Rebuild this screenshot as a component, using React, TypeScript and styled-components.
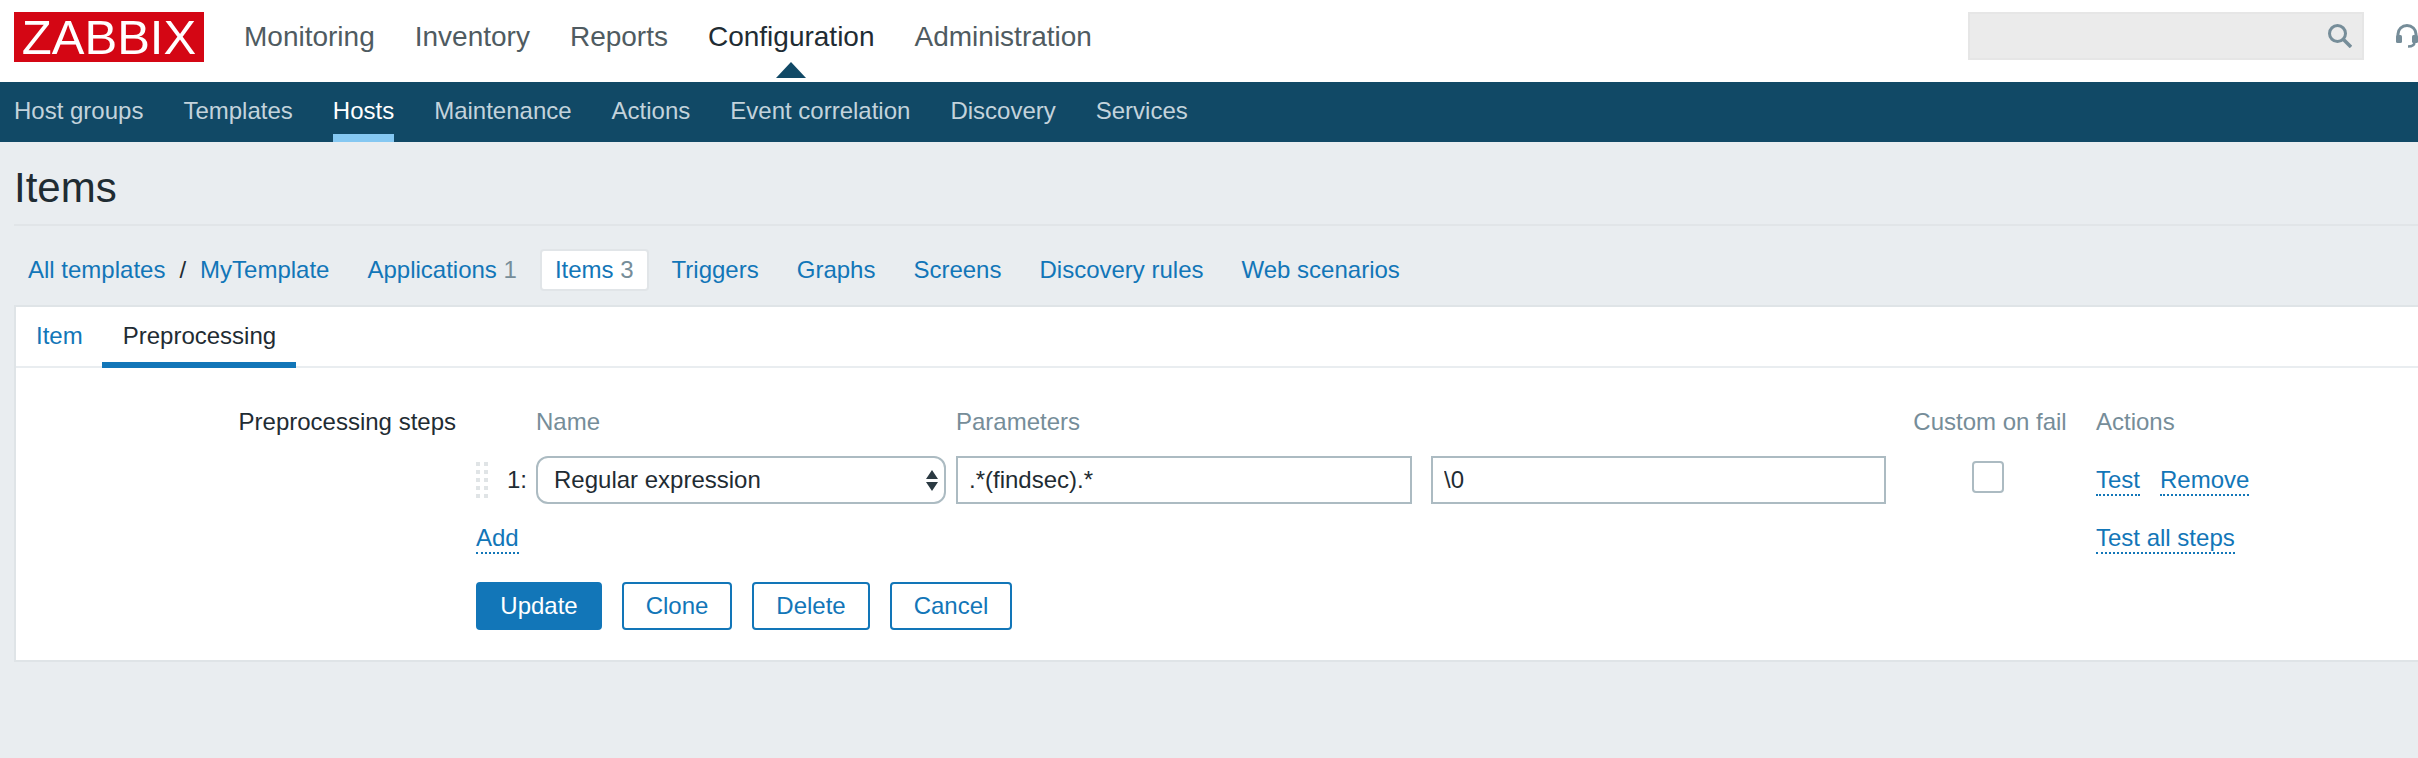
import React from "react";
import styled, { createGlobalStyle } from "styled-components";

const Global = createGlobalStyle`
  html, body { margin: 0; padding: 0; overflow: hidden; background: #e9edf0; }
  body { font-family: "Liberation Sans", Arial, sans-serif; font-size: 24px; color: #1f2c33; }
  * { box-sizing: border-box; }
`;

const Page = styled.div`
  width: 2418px;
  height: 758px;
  overflow: hidden;
  background: #e9edf0;
`;

const Header = styled.header`
  height: 82px;
  background: #fff;
  display: flex;
  align-items: flex-start;
  padding-left: 14px;
`;

const Logo = styled.div`
  width: 190px;
  height: 50px;
  margin-top: 12px;
  background: #d40614;
  color: #fff;
  font-size: 49px;
  line-height: 50px;
  text-align: center;
`;

const MainMenu = styled.nav`
  display: flex;
  gap: 40px;
  margin-left: 40px;
  height: 82px;
  align-items: center;
`;

const MainLink = styled.a<{ $active?: boolean }>`
  position: relative;
  font-size: 28px;
  line-height: 32px;
  margin-top: -9px;
  color: ${(p) => (p.$active ? "#1f2c33" : "#4f5b61")};
  ${(p) =>
    p.$active &&
    `&::after {
      content: "";
      position: absolute;
      left: 50%;
      bottom: -25px;
      margin-left: -15px;
      border-left: 15px solid transparent;
      border-right: 15px solid transparent;
      border-bottom: 16px solid #114966;
    }`}
`;

const HeaderRight = styled.div`
  margin-left: auto;
  display: flex;
  align-items: flex-start;
  width: 450px;
  padding-top: 12px;
`;

const Search = styled.div`
  width: 396px;
  height: 48px;
  background: #ebebeb;
  border: 2px solid #e6e6e6;
  display: flex;
  align-items: center;
  justify-content: flex-end;
  padding-right: 10px;
  flex: none;
`;

const SupportIcon = styled.svg`
  margin: 12px 0 0 32px;
  flex: none;
`;

const SubNav = styled.nav`
  height: 60px;
  background: #114966;
  display: flex;
  gap: 40px;
  padding-left: 14px;
`;

const SubLink = styled.a<{ $active?: boolean }>`
  height: 60px;
  line-height: 58px;
  font-size: 24px;
  color: ${(p) => (p.$active ? "#fff" : "#c3d3dc")};
  border-bottom: 8px solid ${(p) => (p.$active ? "#85c8f2" : "transparent")};
`;

const TitleBar = styled.div`
  height: 84px;
  margin-left: 14px;
  border-bottom: 2px solid #e1e5e8;
`;

const Title = styled.h1`
  margin: 0;
  font-size: 42px;
  font-weight: 400;
  line-height: 48px;
  padding-top: 22px;
  color: #1f2c33;
`;

const Crumbs = styled.div`
  display: flex;
  align-items: center;
  gap: 8px;
  height: 42px;
  margin-top: 23px;
  padding-left: 13px;
`;

const Crumb = styled.a<{ $active?: boolean }>`
  height: 42px;
  line-height: 38px;
  padding: 0 13px;
  border: 2px solid ${(p) => (p.$active ? "#e1e5e8" : "transparent")};
  border-radius: 4px;
  background: ${(p) => (p.$active ? "#fff" : "transparent")};
  color: #1276b8;
  white-space: nowrap;
`;

const CrumbPair = styled.div`
  display: flex;
  align-items: center;
  height: 42px;
  padding: 0 15px 0 15px;
  color: #1276b8;
`;

const Slash = styled.span`
  color: #1f2c33;
  margin: 0 14px 0 14px;
`;

const Count = styled.span`
  color: #768d99;
`;

const Panel = styled.section`
  margin: 14px 0 0 14px;
  background: #fff;
  border: 2px solid #dfe4e7;
  border-right: 0;
  height: 357px;
`;

const Tabs = styled.div`
  display: flex;
  height: 61px;
  border-bottom: 2px solid #e9edf0;
`;

const Tab = styled.a<{ $active?: boolean }>`
  height: 61px;
  padding: 0 20px 0 ${(p) => (p.$active ? "21px" : "20px")};
  margin-left: ${(p) => (p.$active ? "-1px" : "0")};
  line-height: 58px;
  color: ${(p) => (p.$active ? "#1f2c33" : "#1276b8")};
  border-bottom: 6px solid ${(p) => (p.$active ? "#1276b8" : "transparent")};
`;

const FormRow = styled.div`
  display: flex;
  padding-top: 39px;
`;

const FieldLabel = styled.div`
  width: 440px;
  flex: none;
  text-align: right;
  line-height: 30px;
  margin-right: 20px;
`;

const Field = styled.div`
  flex: 1;
`;

const StepTable = styled.div`
  display: grid;
  grid-template-columns: 60px 420px 475px 455px 210px 1fr;
  grid-template-rows: 30px 48px 31px;
  row-gap: 19px;
  align-items: center;
`;

const Head = styled.div<{ $center?: boolean }>`
  color: #768d99;
  line-height: 30px;
  white-space: nowrap;
  ${(p) => p.$center && "text-align: center; margin-left: -2px;"}
`;

const Spacer = styled.div``;

const Lead = styled.div`
  display: flex;
  align-items: center;
  height: 48px;
`;

const Num = styled.span`
  margin-left: 19px;
  color: #1f2c33;
`;

const SelectBox = styled.div`
  width: 410px;
  height: 48px;
  border: 2px solid #acbbc2;
  border-radius: 12px;
  background: #fff;
  display: flex;
  align-items: center;
  justify-content: space-between;
  padding: 0 6px 0 16px;
  color: #1f2c33;
`;

const TextField = styled.input`
  width: 456px;
  height: 48px;
  border: 2px solid #acbbc2;
  background: #fff;
  padding: 0 11px;
  margin: 0;
  font: inherit;
  color: #1f2c33;
  outline: none;
  border-radius: 0;
`;

const ShortField = styled(TextField)`
  width: 455px;
`;

const Check = styled.div`
  width: 32px;
  height: 32px;
  border: 2px solid #acbbc2;
  border-radius: 4px;
  background: #fff;
  margin: -6px 0 0 86px;
`;

const ActionCell = styled.div`
  display: flex;
  gap: 20px;
  padding-top: 2px;
`;

const Dotted = styled.a`
  display: inline-block;
  line-height: 28px;
  color: #1276b8;
  border-bottom: 2px dotted #1276b8;
  white-space: nowrap;
`;

const AddCell = styled.div`
  grid-column: 1 / span 5;
  display: flex;
  align-self: end;
`;

const AllCell = styled.div`
  display: flex;
  align-self: end;
`;

const Buttons = styled.div`
  display: flex;
  gap: 20px;
  margin-top: 28px;
`;

const Button = styled.button<{ $primary?: boolean; $w: number }>`
  width: ${(p) => p.$w}px;
  height: 48px;
  padding: 0;
  border: 2px solid #1276b8;
  border-radius: 4px;
  background: ${(p) => (p.$primary ? "#1276b8" : "#fff")};
  color: ${(p) => (p.$primary ? "#fff" : "#1276b8")};
  font: inherit;
  line-height: 44px;
`;

const Handle = () => (
  <svg width="12" height="36" viewBox="0 0 12 36" fill="#e0e4e6">
    {[0, 8, 16, 24, 32].map((y) => (
      <React.Fragment key={y}>
        <rect x="0" y={y} width="4" height="4" />
        <rect x="8" y={y} width="4" height="4" />
      </React.Fragment>
    ))}
  </svg>
);

export default function App() {
  return (
    <Page>
      <Global />
      <Header>
        <Logo>ZABBIX</Logo>
        <MainMenu>
          <MainLink>Monitoring</MainLink>
          <MainLink>Inventory</MainLink>
          <MainLink>Reports</MainLink>
          <MainLink $active>Configuration</MainLink>
          <MainLink>Administration</MainLink>
        </MainMenu>
        <HeaderRight>
          <Search>
            <svg width="24" height="24" viewBox="0 0 24 24" fill="none" stroke="#768d99" strokeWidth="3">
              <circle cx="9.5" cy="9.5" r="8" />
              <path d="M15.5 15.5 L23 23" strokeWidth="3.5" />
            </svg>
          </Search>
          <SupportIcon width="22" height="24" viewBox="0 0 22 24" fill="none">
            <path d="M2 14 V10 a9 8.5 0 0 1 18 0 V14" stroke="#768d99" strokeWidth="3" />
            <rect x="0" y="11" width="6" height="8" rx="1.5" fill="#768d99" />
            <rect x="16" y="11" width="6" height="8" rx="1.5" fill="#768d99" />
            <path d="M18.5 18 q0 4.5 -6.5 4.5" stroke="#768d99" strokeWidth="2.5" />
          </SupportIcon>
        </HeaderRight>
      </Header>
      <SubNav>
        <SubLink>Host groups</SubLink>
        <SubLink>Templates</SubLink>
        <SubLink $active>Hosts</SubLink>
        <SubLink>Maintenance</SubLink>
        <SubLink>Actions</SubLink>
        <SubLink>Event correlation</SubLink>
        <SubLink>Discovery</SubLink>
        <SubLink>Services</SubLink>
      </SubNav>
      <TitleBar>
        <Title>Items</Title>
      </TitleBar>
      <Crumbs>
        <CrumbPair>
          All templates<Slash>/</Slash>MyTemplate
        </CrumbPair>
        <Crumb>
          Applications <Count>1</Count>
        </Crumb>
        <Crumb $active>
          Items <Count>3</Count>
        </Crumb>
        <Crumb>Triggers</Crumb>
        <Crumb>Graphs</Crumb>
        <Crumb>Screens</Crumb>
        <Crumb>Discovery rules</Crumb>
        <Crumb>Web scenarios</Crumb>
      </Crumbs>
      <Panel>
        <Tabs>
          <Tab>Item</Tab>
          <Tab $active>Preprocessing</Tab>
        </Tabs>
        <FormRow>
          <FieldLabel>Preprocessing steps</FieldLabel>
          <Field>
            <StepTable>
              <Spacer />
              <Head>Name</Head>
              <Head>Parameters</Head>
              <Spacer />
              <Head $center>Custom on fail</Head>
              <Head>Actions</Head>

              <Lead>
                <Handle />
                <Num>1:</Num>
              </Lead>
              <SelectBox>
                Regular expression
                <svg width="12" height="21" viewBox="0 0 12 21" fill="#2b3a42">
                  <path d="M6 0 L12 9 H0 Z M0 12 H12 L6 21 Z" />
                </svg>
              </SelectBox>
              <TextField defaultValue=".*(findsec).*" readOnly />
              <ShortField defaultValue="\0" readOnly />
              <Check />
              <ActionCell>
                <Dotted>Test</Dotted>
                <Dotted>Remove</Dotted>
              </ActionCell>

              <AddCell>
                <Dotted>Add</Dotted>
              </AddCell>
              <AllCell>
                <Dotted>Test all steps</Dotted>
              </AllCell>
            </StepTable>
            <Buttons>
              <Button $primary $w={126}>Update</Button>
              <Button $w={110}>Clone</Button>
              <Button $w={118}>Delete</Button>
              <Button $w={122}>Cancel</Button>
            </Buttons>
          </Field>
        </FormRow>
      </Panel>
    </Page>
  );
}
